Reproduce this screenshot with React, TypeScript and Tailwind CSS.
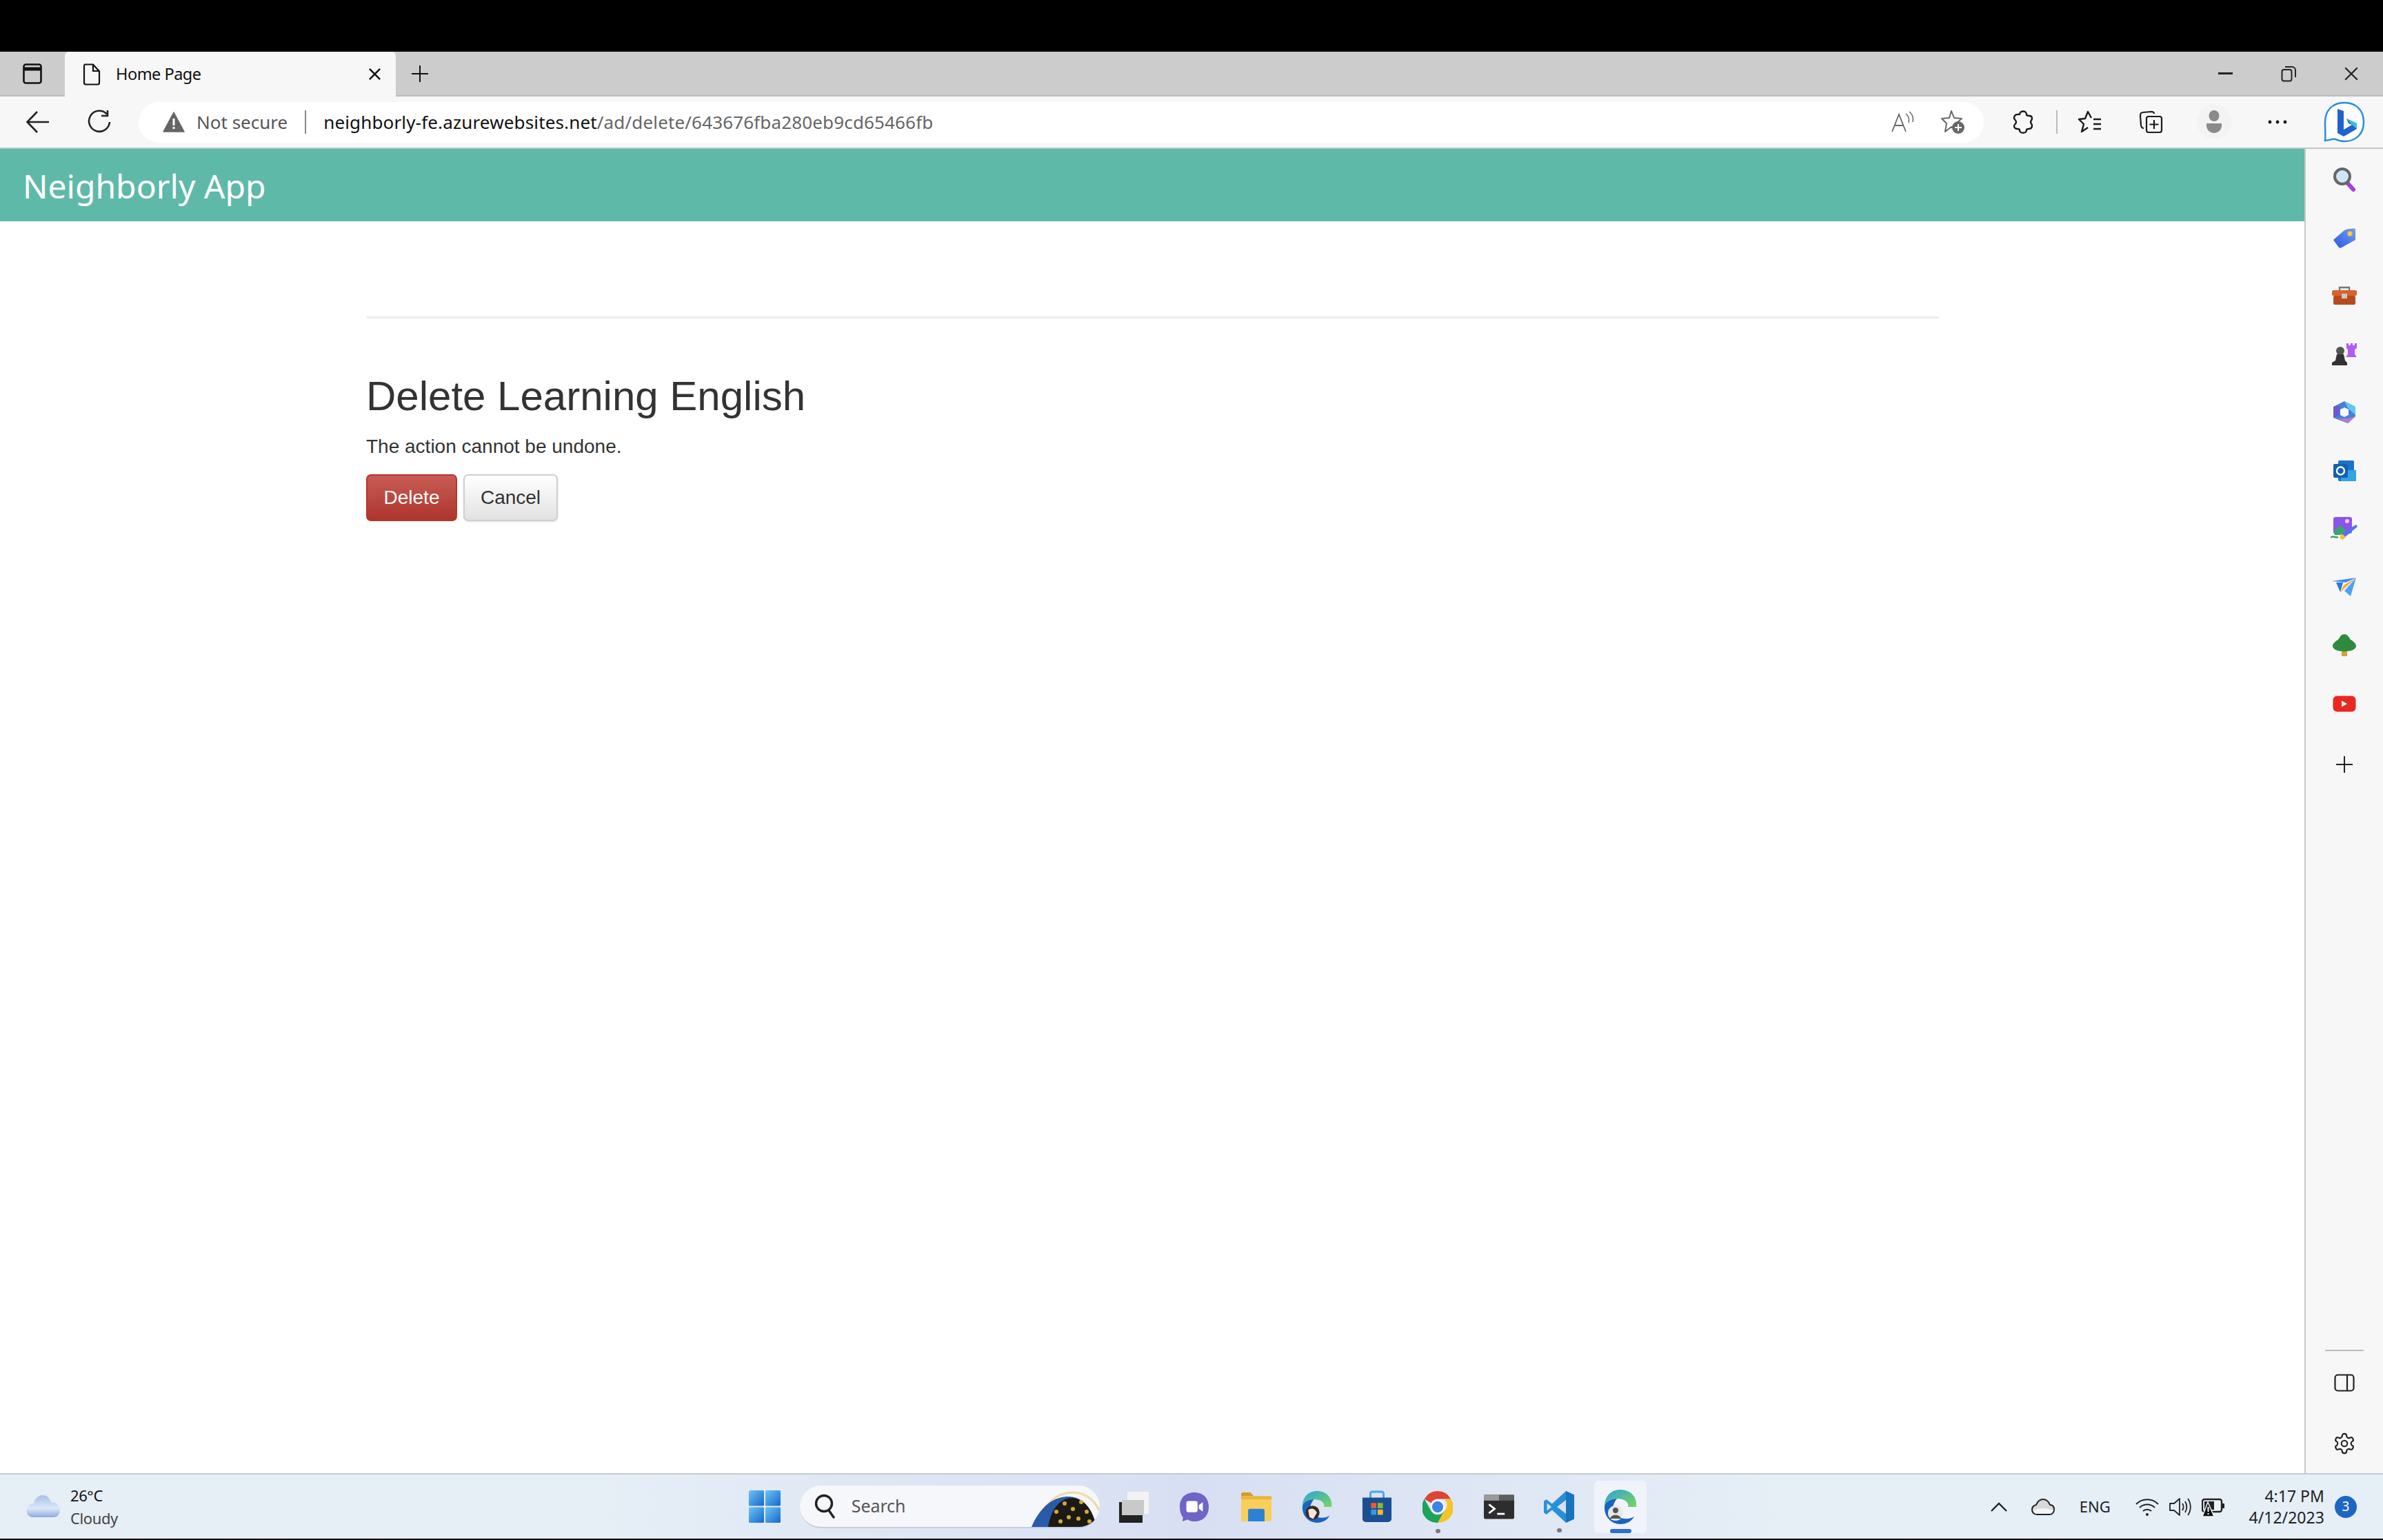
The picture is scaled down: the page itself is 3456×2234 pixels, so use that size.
const ui = "font-['Noto_Sans',sans-serif]"

function Back() {
	return (
		<svg width="36" height="34" viewBox="0 0 36 34" fill="none" stroke="#222" strokeWidth="2.6">
			<path d="M34 17H3M17 2 2.5 17 17 32" />
		</svg>
	)
}

function Refresh() {
	return (
		<svg width="34" height="36" viewBox="0 0 34 36" fill="none" stroke="#222" strokeWidth="2.6">
			<path d="M28 6.5A15 15 0 1 0 32 18" />
			<path d="M29 1v8h-9" />
		</svg>
	)
}

function Warning() {
	return (
		<svg width="32" height="30" viewBox="0 0 32 30">
			<path d="M16 1 31 29H1Z" fill="#666" stroke="#666" strokeLinejoin="round" strokeWidth="1.5" />
			<rect x="14.5" y="10" width="3" height="10" fill="#fff" />
			<rect x="14.5" y="22" width="3" height="3" fill="#fff" />
		</svg>
	)
}

function ReadAloud() {
	return (
		<svg width="34" height="32" viewBox="0 0 34 32" fill="none" stroke="#666" strokeWidth="1.8">
			<path d="M2 30 12 5l10 25M6 21h12" />
			<path d="M22 4c4 3 5 8 4 13M27 1c5 4 6 10 5 15" strokeWidth="1.5" />
		</svg>
	)
}

function StarPlus() {
	return (
		<svg width="36" height="36" viewBox="0 0 36 36" fill="none">
			<path d="M16 2l4 10 11 1-8 7 2 10-9-5-9 7 2-12-7-7 11-1Z" stroke="#666" strokeWidth="2" strokeLinejoin="round" />
			<circle cx="26" cy="26" r="9" fill="#666" />
			<path d="M26 21v10M21 26h10" stroke="#fff" strokeWidth="2" />
		</svg>
	)
}

function Puzzle() {
	return (
		<svg width="32" height="34" viewBox="0 0 32 34" fill="none" stroke="#1a1a1a" strokeWidth="2.4" strokeLinejoin="round">
			<path d="M11 6c0-6 10-6 10 0 0 2 2 2 4 2 3 0 4 2 4 4 0 2-2 3-2 5s2 3 2 5c0 3-2 5-5 5-2 0-3 1-3 2 0 5-10 5-10 0 0-1-1-2-3-2-3 0-5-2-5-4 0-3 3-3 3-6s-3-3-3-6c0-3 2-5 5-5 2 0 3 0 3-1Z" />
		</svg>
	)
}

function Favorites() {
	return (
		<svg width="36" height="34" viewBox="0 0 36 34" fill="none" stroke="#1a1a1a" strokeWidth="2.4" strokeLinejoin="round">
			<path d="M20 11 15 2l-4 10-9 1 7 7-3 11 9-6" />
			<path d="M23 13h11M23 20h11M23 27h11" />
		</svg>
	)
}

function Collections() {
	return (
		<svg width="36" height="34" viewBox="0 0 36 34" fill="none" stroke="#1a1a1a" strokeWidth="2.2" strokeLinejoin="round">
			<path d="M22 5c0-2-2-3-4-3L6 3C3 3 2 5 2 8l1 14c0 2 2 4 4 4" />
			<rect x="11" y="9" width="22" height="23" rx="3" />
			<path d="M22 14v13M15.5 20.5h13" />
		</svg>
	)
}

function Profile() {
	return (
		<div className="flex items-center justify-center w-[50px] h-[50px] rounded-full bg-[#f3f3f3]">
			<svg width="26" height="34" viewBox="0 0 26 34" fill="#8a8a8a">
				<ellipse cx="13" cy="8" rx="7.5" ry="8" />
				<path d="M2 19h22c1 9-5 14-11 14S1 28 2 19Z" />
			</svg>
		</div>
	)
}

function Dots() {
	return (
		<svg width="28" height="6" viewBox="0 0 28 6" fill="#1a1a1a">
			<circle cx="3" cy="3" r="2.4" />
			<circle cx="14" cy="3" r="2.4" />
			<circle cx="25" cy="3" r="2.4" />
		</svg>
	)
}

function BingLogo() {
	return (
		<svg width="60" height="60" viewBox="0 0 60 60">
			<path d="M30 2C12 2 2 14 2 30c0 11 1 18 0 27 5 0 10-3 15-2 5 2 9 3 13 3 18 0 28-12 28-28S48 2 30 2Z" fill="#fff" stroke="#2b8be0" strokeWidth="2.5" />
			<path d="M20 11l9 3v27l12-7-5-2-3-7 15 7v8L29 51l-9-5Z" fill="#1f62d0" />
			<path d="M33 25l15 7v8l-7-6Z" fill="#38c0d8" />
		</svg>
	)
}

function Search3d() {
	return (
		<svg width="34" height="36" viewBox="0 0 34 36">
			<path d="M21 23l9 10" stroke="#a63fd8" strokeWidth="6" strokeLinecap="round" />
			<circle cx="14" cy="14" r="11" fill="#cfe6f7" stroke="#666" strokeWidth="4" />
		</svg>
	)
}

function Tag() {
	return (
		<svg width="34" height="32" viewBox="0 0 34 32">
			<defs>
				<linearGradient id="tagg" x1="0" y1="1" x2="1" y2="0">
					<stop offset="0" stopColor="#2c56e8" />
					<stop offset="1" stopColor="#6fa0f0" />
				</linearGradient>
			</defs>
			<path d="M1 19 17 5c4-2 12-3 16-2v16L13 30c-2 1-3 1-4 0Z" fill="url(#tagg)" />
			<circle cx="25" cy="10" r="3.5" fill="#f5d14a" stroke="#e5a92a" />
		</svg>
	)
}

function Toolbox() {
	return (
		<svg width="38" height="30" viewBox="0 0 38 30">
			<path d="M12 8V3h14v5" fill="none" stroke="#777" strokeWidth="2.4" />
			<rect x="1" y="7" width="36" height="8" rx="2" fill="#d9622b" />
			<rect x="3" y="15" width="32" height="13" rx="2" fill="#b84a1d" />
			<rect x="15" y="12" width="8" height="7" fill="#c8c8c8" />
		</svg>
	)
}

function Chess() {
	return (
		<svg width="38" height="34" viewBox="0 0 38 34">
			<path d="M22 1h3v3h3V1h3v3h3V1h3v7l-3 2v7l3 4H21l3-4v-7l-2-2Z" fill="#b05cf0" />
			<circle cx="13" cy="12" r="6" fill="#555" />
			<path d="M8 17h10l2 9 3 3v4H1v-4l5-3Z" fill="#333" />
		</svg>
	)
}

function Office() {
	return (
		<svg width="34" height="34" viewBox="0 0 34 34">
			<path d="M17 1 33 9v14L22 33 1 25V9Z" fill="#4a7fd6" />
			<path d="M17 1 33 9v12L22 11Z" fill="#63c6ee" />
			<path d="M8 26 22 33l11-10-11 3Z" fill="#b07ad8" />
			<path d="M1 9v16l9-4V8Z" fill="#6a5acd" />
			<path d="M17 10l6 3v8l-6 3-6-3v-8Z" fill="#f7f7f7" />
		</svg>
	)
}

function Outlook() {
	return (
		<svg width="34" height="32" viewBox="0 0 34 32">
			<rect x="8" y="1" width="23" height="30" rx="2" fill="#1a74c9" />
			<path d="M12 15h22v16H12Z" fill="#30a4e5" />
			<rect x="1" y="6" width="21" height="20" rx="2" fill="#1560ae" />
			<circle cx="11.5" cy="16" r="5.5" fill="none" stroke="#fff" strokeWidth="2.4" />
		</svg>
	)
}

function ImageBrush() {
	return (
		<svg width="40" height="36" viewBox="0 0 40 36">
			<rect x="4" y="1" width="27" height="24" rx="3" fill="#8a55e8" />
			<circle cx="24" cy="7" r="3" fill="#f4c8f0" />
			<path d="M4 22l10-9 11 10-3 4H6Z" fill="#39a66c" />
			<path d="M16 25 37 12l2 3-18 15Z" fill="#5c6ff0" />
			<path d="M16 25l6 5-4 4-5-2Z" fill="#f0c040" />
			<path d="M0 31c4-4 7 1 11-1" stroke="#2f8f5c" strokeWidth="2" fill="none" />
		</svg>
	)
}

function Plane() {
	return (
		<svg width="36" height="28" viewBox="0 0 36 28">
			<path d="M0 5 35 0 20 7Z" fill="#3d8ef0" />
			<path d="M35 0 27 27l-9-8Z" fill="#4da3f5" />
			<path d="M6 7h10l-4 14Z" fill="#2a78dc" />
			<path d="M12 21 35 0 17 11Z" fill="#f2a93b" />
		</svg>
	)
}

function Tree() {
	return (
		<svg width="34" height="34" viewBox="0 0 34 34">
			<rect x="13" y="24" width="8" height="9" rx="1" fill="#dd9c3a" />
			<path d="M17 1c5 0 7 5 9 8 4 2 8 6 8 9 0 4-5 8-17 8S0 22 0 18c0-3 4-7 8-9 2-3 4-8 9-8Z" fill="#2f8a3e" />
		</svg>
	)
}

function Youtube() {
	return (
		<svg width="34" height="24" viewBox="0 0 34 24">
			<rect x="0.5" y="0.5" width="33" height="23" rx="6" fill="#e8291f" />
			<path d="M13 7.5v9l8-4.5Z" fill="#fff" />
		</svg>
	)
}

function Plus({ size = 26, color = '#222' }: any) {
	return (
		<svg width={size} height={size} viewBox="0 0 26 26" stroke={color} strokeWidth="2">
			<path d="M13 1v24M1 13h24" />
		</svg>
	)
}

function PanelIcon() {
	return (
		<svg width="30" height="26" viewBox="0 0 30 26" fill="none" stroke="#222" strokeWidth="2.2">
			<rect x="1.5" y="1.5" width="27" height="23" rx="4" />
			<path d="M19 1.5v23" />
		</svg>
	)
}

function Gear() {
	return (
		<svg width="34" height="36" viewBox="0 0 24 24" fill="none" stroke="#222" strokeWidth="1.5" strokeLinecap="round" strokeLinejoin="round">
			<path d="M12.22 2h-.44a2 2 0 0 0-2 2v.18a2 2 0 0 1-1 1.73l-.43.25a2 2 0 0 1-2 0l-.15-.08a2 2 0 0 0-2.73.73l-.22.38a2 2 0 0 0 .73 2.73l.15.1a2 2 0 0 1 1 1.72v.51a2 2 0 0 1-1 1.74l-.15.09a2 2 0 0 0-.73 2.73l.22.38a2 2 0 0 0 2.73.73l.15-.08a2 2 0 0 1 2 0l.43.25a2 2 0 0 1 1 1.73V20a2 2 0 0 0 2 2h.44a2 2 0 0 0 2-2v-.18a2 2 0 0 1 1-1.73l.43-.25a2 2 0 0 1 2 0l.15.08a2 2 0 0 0 2.73-.73l.22-.39a2 2 0 0 0-.73-2.73l-.15-.08a2 2 0 0 1-1-1.74v-.5a2 2 0 0 1 1-1.74l.15-.09a2 2 0 0 0 .73-2.73l-.22-.38a2 2 0 0 0-2.73-.73l-.15.08a2 2 0 0 1-2 0l-.43-.25a2 2 0 0 1-1-1.73V4a2 2 0 0 0-2-2z" />
			<circle cx="12" cy="12" r="3" />
		</svg>
	)
}

function SidebarToggle() {
	return (
		<svg width="28" height="30" viewBox="0 0 28 30" fill="none" stroke="#111" strokeWidth="2.6">
			<rect x="1.5" y="1.5" width="25" height="27" rx="3" />
			<path d="M1.5 8h25" strokeWidth="5" />
		</svg>
	)
}

function DocIcon() {
	return (
		<svg width="26" height="32" viewBox="0 0 26 32" fill="none" stroke="#111" strokeWidth="2.2">
			<path d="M3 1.5h12l9 10V28a2.5 2.5 0 0 1-2.5 2.5h-17A2.5 2.5 0 0 1 2 28V3Z" />
			<path d="M15 1.5V11h9" />
		</svg>
	)
}

function CloseX({ size = 20, color = '#111', width = 2.6 }: any) {
	return (
		<svg width={size} height={size} viewBox="0 0 20 20" stroke={color} strokeWidth={width}>
			<path d="M2 2l16 16M18 2 2 18" />
		</svg>
	)
}

function Restore() {
	return (
		<svg width="22" height="24" viewBox="0 0 22 24" fill="none" stroke="#222" strokeWidth="2">
			<rect x="1.5" y="6" width="14" height="16.5" rx="3" />
			<path d="M6 2h10a5 5 0 0 1 5 5v10" />
		</svg>
	)
}

function WeatherCloud() {
	return (
		<svg width="50" height="34" viewBox="0 0 50 34">
			<defs>
				<linearGradient id="wc" x1="0" y1="0" x2="0" y2="1">
					<stop offset="0" stopColor="#a9bfe8" />
					<stop offset="0.6" stopColor="#dce8f8" />
					<stop offset="1" stopColor="#8ea9e0" />
				</linearGradient>
			</defs>
			<path d="M10 32C2 32 0 25 1 20c1-5 6-8 10-8C13 4 18 0 24 0s10 4 12 10c7 0 13 4 13 12 0 6-4 10-10 10Z" fill="url(#wc)" />
		</svg>
	)
}

function WindowsLogo() {
	return (
		<svg width="46" height="47" viewBox="0 0 46 47">
			<defs>
				<linearGradient id="wl" x1="0" y1="0" x2="1" y2="1">
					<stop offset="0" stopColor="#6cc4f7" />
					<stop offset="1" stopColor="#1668c8" />
				</linearGradient>
			</defs>
			<rect width="22" height="22.5" rx="1.5" fill="url(#wl)" />
			<rect x="24" width="22" height="22.5" rx="1.5" fill="url(#wl)" />
			<rect y="24.5" width="22" height="22.5" rx="1.5" fill="url(#wl)" />
			<rect x="24" y="24.5" width="22" height="22.5" rx="1.5" fill="url(#wl)" />
		</svg>
	)
}

function SearchGlass() {
	return (
		<svg width="32" height="36" viewBox="0 0 32 36" fill="none" stroke="#222" strokeWidth="3.4">
			<circle cx="15" cy="14" r="11.5" />
			<path d="M22 24l7 10" strokeLinecap="round" />
		</svg>
	)
}

function SearchArt() {
	const dots = [[42, 30], [54, 18], [66, 26], [78, 16], [60, 38], [74, 40], [86, 30], [48, 44], [90, 44]]
	return (
		<svg width="105" height="52" viewBox="0 0 105 52">
			<path d="M10 52C22 20 42 2 66 2c18 0 32 12 38 26" fill="none" stroke="#efd9a0" strokeWidth="3" />
			<path d="M6 52C18 24 36 8 60 8c18 0 34 14 40 44Z" fill="#2a5ba8" />
			<path d="M30 52C34 26 48 10 64 10c16 0 30 14 36 42Z" fill="#1d1a14" />
			{dots.map(([x, y], i) => (
				<circle key={i} cx={x} cy={y} r="3" fill="#d6a73c" />
			))}
		</svg>
	)
}

function TaskView() {
	return (
		<svg width="44" height="46" viewBox="0 0 44 46">
			<rect x="0" y="16" width="34" height="30" fill="#222" />
			<rect x="12" y="1" width="31" height="32" fill="#f3f3f3" />
			<rect x="4" y="13" width="32" height="22" fill="#c9c9c9" />
		</svg>
	)
}

function TeamsChat() {
	return (
		<svg width="46" height="46" viewBox="0 0 46 46">
			<path d="M23 1C9 1 1 10 1 23c0 7 2 12 5 16l-1 6 8-3c3 2 6 3 10 3 14 0 22-9 22-22S37 1 23 1Z" fill="#7064c8" />
			<rect x="11" y="14" width="17" height="17" rx="3" fill="#fff" />
			<path d="M30 20l6-4v14l-6-4Z" fill="#fff" />
		</svg>
	)
}

function Folder() {
	return (
		<svg width="48" height="46" viewBox="0 0 48 46">
			<path d="M0 3a3 3 0 0 1 3-3h12l5 6h-20Z" fill="#d49a2a" />
			<rect x="0" y="6" width="48" height="40" rx="2" fill="#f9cf5b" />
			<rect x="0" y="6" width="48" height="5" fill="#e9b53f" />
			<path d="M11 29a3 3 0 0 1 3-3h20a3 3 0 0 1 3 3v17H11Z" fill="#2b82d6" />
		</svg>
	)
}

function EdgeIcon({ avatar }: any) {
	return (
		<svg width="48" height="50" viewBox="0 0 48 50">
			<defs>
				<linearGradient id="eg" x1="0" y1="0" x2="1" y2="1">
					<stop offset="0" stopColor="#2aa3df" />
					<stop offset="1" stopColor="#7bd75a" />
				</linearGradient>
			</defs>
			<path d="M24 0C10 0 1 10 1 24c3-8 10-11 18-11 12 0 18 6 16 12h12C49 11 39 0 24 0Z" fill="url(#eg)" />
			<path d="M1 24C0 38 10 50 24 50c9 0 16-4 20-11-8 5-20 4-26-2-6-5-7-14 1-24C10 13 3 17 1 24Z" fill="#1a64c0" />
			<circle cx="17" cy="34" r="11" fill={avatar ? '#e8e8e8' : '#3a2a22'} />
			{avatar ? (
				<>
					<circle cx="17" cy="30" r="4" fill="#555" />
					<path d="M9 42c2-7 14-7 16 0Z" fill="#555" />
				</>
			) : (
				<path d="M10 30c5-4 10-3 14 4l-6 10-6-3Z" fill="#f0e6dc" />
			)}
		</svg>
	)
}

function Store() {
	return (
		<svg width="46" height="48" viewBox="0 0 46 48">
			<path d="M13 12V4a3 3 0 0 1 3-3h14a3 3 0 0 1 3 3v8" fill="none" stroke="#3fa8ea" strokeWidth="3" />
			<path d="M1 10h44v32a5 5 0 0 1-5 5H6a5 5 0 0 1-5-5Z" fill="#1c4f92" />
			<rect x="14" y="18" width="8" height="8" fill="#ee5a34" />
			<rect x="24" y="18" width="8" height="8" fill="#82bb3c" />
			<rect x="14" y="28" width="8" height="8" fill="#2a9fe6" />
			<rect x="24" y="28" width="8" height="8" fill="#f9b928" />
		</svg>
	)
}

function Chrome() {
	return (
		<svg width="46" height="48" viewBox="-23 -24 46 48">
			<path d="M0-23a23 23 0 0 1 20 11.5H0a11.5 11.5 0 0 0-10 5.7L-20-11.5A23 23 0 0 1 0-23Z" fill="#dd4435" transform="scale(1 1.04)" />
			<path d="M20-12A23 23 0 0 1 0 24L10 6a11.5 11.5 0 0 0 0-18Z" fill="#f7c427" />
			<path d="M-20-12A23 23 0 0 0 0 24L10 6A11.5 11.5 0 0 1-10 6Z" fill="#1fa25a" />
			<circle r="11" fill="#fff" />
			<circle r="8.5" fill="#3e83e8" />
		</svg>
	)
}

function Terminal() {
	return (
		<svg width="48" height="38" viewBox="0 0 48 38">
			<rect width="48" height="38" rx="2" fill="#2d2d2d" />
			<rect x="0" y="0" width="24" height="9" fill="#9a9a9a" />
			<rect x="24" y="0" width="24" height="9" fill="#5e5e5e" />
			<path d="M8 15l9 7-9 7" fill="none" stroke="#fff" strokeWidth="3" />
			<path d="M21 30h12" stroke="#fff" strokeWidth="3" />
		</svg>
	)
}

function VSCode() {
	return (
		<svg width="48" height="50" viewBox="0 0 48 50">
			<path d="M35 0 48 6v38l-13 6L13 30 4 37l-4-3V16l4-3 9 7Z" fill="#2b8fd8" />
			<path d="M35 0 48 6v38l-13 6Z" fill="#1a73bd" />
			<path d="M35 14 21 25l14 11Z" fill="#d9e2f3" />
			<path d="M5 19l7 6-7 6Z" fill="#d9e2f3" />
		</svg>
	)
}

function OneDrive() {
	return (
		<svg width="34" height="24" viewBox="0 0 34 24">
			<path d="M8 23C3 23 1 19 1 16s2-6 6-7C9 4 13 1 17 1s8 3 10 8c4 0 6 3 6 7s-3 7-7 7Z" fill="#d8d8d8" stroke="#222" strokeWidth="2" />
			<path d="M3 17c8-4 20-4 29 0-1 3-3 5-6 5H8c-3 0-4-2-5-5Z" fill="#f4f4f4" />
		</svg>
	)
}

function Wifi() {
	return (
		<svg width="34" height="26" viewBox="0 0 34 26" fill="none" stroke="#222" strokeWidth="2">
			<path d="M1 9c9-9 23-9 32 0M6 14c6-6 16-6 22 0M11 19c3-3 9-3 12 0" />
			<circle cx="17" cy="24" r="2" fill="#222" stroke="none" />
		</svg>
	)
}

function Volume() {
	return (
		<svg width="34" height="28" viewBox="0 0 34 28" fill="none" stroke="#222" strokeWidth="1.8">
			<path d="M1 9h6l8-7v24l-8-7H1Z" strokeLinejoin="round" />
			<path d="M19 9c2 3 2 7 0 10M23 6c3 5 3 11 0 16M27 2c5 7 5 17 0 24" />
		</svg>
	)
}

function Battery() {
	return (
		<svg width="34" height="30" viewBox="0 0 34 30">
			<rect x="1" y="4" width="28" height="18" rx="3" fill="#eef2f8" stroke="#222" strokeWidth="2.4" />
			<rect x="29" y="10" width="4" height="7" fill="#222" />
			<rect x="4" y="7" width="14" height="12" fill="#222" />
			<path d="M9 8 18 29H1Z" fill="#111" stroke="#eef2f8" strokeWidth="1.5" />
			<rect x="8.5" y="15" width="2" height="7" fill="#fff" />
			<rect x="8.5" y="24" width="2" height="2" fill="#fff" />
		</svg>
	)
}

const sideIcons = [
	<Search3d />,
	<Tag />,
	<Toolbox />,
	<Chess />,
	<Office />,
	<Outlook />,
	<ImageBrush />,
	<Plane />,
	<Tree />,
	<Youtube />,
]

export default function App() {
	return (
		<div className="w-[3456px] h-[2234px] flex flex-col overflow-hidden bg-white">
			<div className="h-[75px] bg-black shrink-0"></div>

			{/* Tab strip */}
			<div className={`h-[65px] shrink-0 flex bg-[#cccccc] border-b-2 border-[#bdbdbd] ${ui}`}>
				<div className="w-[94px] flex items-center justify-center">
					<SidebarToggle />
				</div>
				<div className="w-[480px] h-[65px] bg-[#f7f7f7] flex items-center pl-[26px] rounded-t-md">
					<DocIcon />
					<span className="ml-[22px] text-[23.5px] tracking-[-0.5px] text-[#111]">Home Page</span>
					<div className="ml-auto mr-[21px]">
						<CloseX size={19} />
					</div>
				</div>
				<div className="ml-[22px] flex items-center">
					<Plus size={26} color="#111" />
				</div>
				<div className="ml-auto flex items-center">
					<div className="h-[3px] w-[21px] bg-[#222]"></div>
					<div className="ml-[70px]">
						<Restore />
					</div>
					<div className="ml-[69px] mr-[35px]">
						<CloseX size={22} color="#222" width={2} />
					</div>
				</div>
			</div>

			{/* Toolbar */}
			<div className={`h-[76px] shrink-0 flex items-center bg-[#f7f7f7] border-b-2 border-[#c4c4c4] ${ui}`}>
				<div className="ml-[10px] w-[90px] flex justify-center">
					<Back />
				</div>
				<div className="w-[88px] flex justify-center">
					<Refresh />
				</div>
				<div className="ml-[13px] w-[2676px] h-[59px] rounded-full bg-white flex items-center pl-[35px] pr-[27px]">
					<Warning />
					<span className="ml-[17px] text-[26px] text-[#555]">Not secure</span>
					<div className="ml-[25px] w-[2px] h-[34px] bg-[#888]"></div>
					<span className="ml-[25px] text-[26px] tracking-[0.15px] text-[#111]">
						neighborly-fe.azurewebsites.net
						<span className="text-[#666]">/ad/delete/643676fba280eb9cd65466fb</span>
					</span>
					<div className="ml-auto">
						<ReadAloud />
					</div>
					<div className="ml-[38px]">
						<StarPlus />
					</div>
				</div>
				<div className="ml-[13px] w-[88px] flex justify-center">
					<Puzzle />
				</div>
				<div className="ml-[4px] w-[2px] h-[34px] bg-[#bbb]"></div>
				<div className="ml-[3px] w-[88px] flex justify-center">
					<Favorites />
				</div>
				<div className="ml-[1px] w-[88px] flex justify-center">
					<Collections />
				</div>
				<div className="ml-[3px] w-[88px] flex justify-center">
					<Profile />
				</div>
				<div className="ml-[4px] w-[88px] flex justify-center">
					<Dots />
				</div>
				<div className="ml-[9px] w-[88px] flex justify-center">
					<BingLogo />
				</div>
			</div>

			<div className="flex-1 min-h-0 flex">
				{/* Page */}
				<div className="flex-1 min-w-0 font-['Liberation_Sans',sans-serif]">
					<div className={`h-[105px] bg-[#5fb9a9] flex items-center pl-[33px] pt-[3px] text-white text-[48px] ${ui}`}>
						Neighborly App
					</div>
					<div className="ml-[531px] w-[2281px]">
						<div className="mt-[138px] h-[3px] bg-[#eeeeee]"></div>
						<h2 className="mt-[80px] text-[60px] leading-[66px] text-[#333]">Delete Learning English</h2>
						<p className="mt-[20px] text-[28px] leading-[40px] text-[#333]">The action cannot be undone.</p>
						<div className="mt-[20px] flex gap-[9px]">
							<button className="w-[132px] h-[68px] rounded-[7px] border-2 border-[#b8342d] bg-gradient-to-b from-[#c75c55] to-[#ad342c] text-white text-[28px]">
								Delete
							</button>
							<button className="w-[137px] h-[68px] rounded-[7px] border-2 border-[#cfcfcf] bg-gradient-to-b from-white to-[#e2e2e2] text-[#333] text-[28px] shadow-sm">
								Cancel
							</button>
						</div>
					</div>
				</div>

				{/* Edge sidebar */}
				<div className="w-[114px] shrink-0 bg-[#f7f7f7] border-l-2 border-[#c8c8c8] flex flex-col items-center pt-[2px]">
					{sideIcons.map((icon, i) => (
						<div key={`side-${i}`} className="h-[84.5px] flex items-center justify-center shrink-0">
							{icon}
						</div>
					))}
					<div className="h-[84px] mt-[4px] flex items-center justify-center">
						<Plus size={26} />
					</div>
					<div className="mt-auto w-[56px] h-[2px] bg-[#bbbbbb]"></div>
					<div className="h-[92px] flex items-center justify-center">
						<PanelIcon />
					</div>
					<div className="h-[84px] mb-[1px] flex items-center justify-center">
						<Gear />
					</div>
				</div>
			</div>

			{/* Taskbar */}
			<div className={`h-[97px] shrink-0 flex items-center border-t-2 border-b-2 border-t-[#c4cad2] border-b-black bg-gradient-to-r from-[#e6eef6] from-25% via-[#d8dff3] via-50% to-[#e6eef6] to-75% ${ui}`}>
				<div className="ml-[38px]">
					<WeatherCloud />
				</div>
				<div className="ml-[14px] flex flex-col leading-[33px]">
					<span className="text-[22px] tracking-[-0.4px] text-[#111]">26°C</span>
					<span className="text-[22px] tracking-[-0.4px] text-[#444]">Cloudy</span>
				</div>

				<div className="ml-[915px]">
					<WindowsLogo />
				</div>
				<div className="ml-[28px] w-[435px] h-[62px] rounded-full bg-[#f6f7fb] border-b-2 border-[#c6ccd8] flex items-center pl-[20px] overflow-hidden">
					<SearchGlass />
					<span className="ml-[23px] text-[25px] tracking-[-0.1px] text-[#555]">Search</span>
					<div className="ml-auto self-end">
						<SearchArt />
					</div>
				</div>
				<div className="ml-[28px] w-[44px] flex justify-center">
					<TaskView />
				</div>
				<div className="ml-[43px] w-[44px] flex justify-center">
					<TeamsChat />
				</div>
				<div className="ml-[46px] w-[44px] flex justify-center">
					<Folder />
				</div>
				<div className="ml-[44px] w-[44px] flex justify-center">
					<EdgeIcon />
				</div>
				<div className="ml-[43px] w-[44px] flex justify-center">
					<Store />
				</div>
				<div className="ml-[44px] w-[44px] relative flex justify-center">
					<Chrome />
					<div className="absolute left-[19px] top-[56px] w-[7px] h-[6px] rounded-full bg-[#777]"></div>
				</div>
				<div className="ml-[45px] w-[44px] flex justify-center">
					<Terminal />
				</div>
				<div className="ml-[43px] w-[44px] relative flex justify-center">
					<VSCode />
					<div className="absolute left-[19px] top-[56px] w-[7px] h-[6px] rounded-full bg-[#777]"></div>
				</div>
				<div className="ml-[29px] w-[76px] h-[76px] rounded-md bg-[#f0f3fa] relative flex items-center justify-center">
					<EdgeIcon avatar />
					<div className="absolute left-[23px] bottom-0 w-[31px] h-[6px] rounded-full bg-[#2a6fd0]"></div>
				</div>

				<div className="ml-[498px]">
					<svg width="26" height="16" viewBox="0 0 26 16" fill="none" stroke="#222" strokeWidth="2.4">
						<path d="M2 14 13 3l11 11" />
					</svg>
				</div>
				<div className="ml-[34px]">
					<OneDrive />
				</div>
				<span className="ml-[36px] text-[22px] text-[#222]">ENG</span>
				<div className="ml-[36px]">
					<Wifi />
				</div>
				<div className="ml-[15px]">
					<Volume />
				</div>
				<div className="ml-[13px]">
					<Battery />
				</div>
				<div className="ml-[34px] w-[110px] flex flex-col items-end leading-[31px] text-[23px] text-[#222]">
					<span>4:17 PM</span>
					<span>4/12/2023</span>
				</div>
				<div className="ml-[15px] w-[32px] h-[32px] rounded-full bg-[#1f66c4] text-white text-[19px] flex items-center justify-center">
					3
				</div>
			</div>
		</div>
	)
}
